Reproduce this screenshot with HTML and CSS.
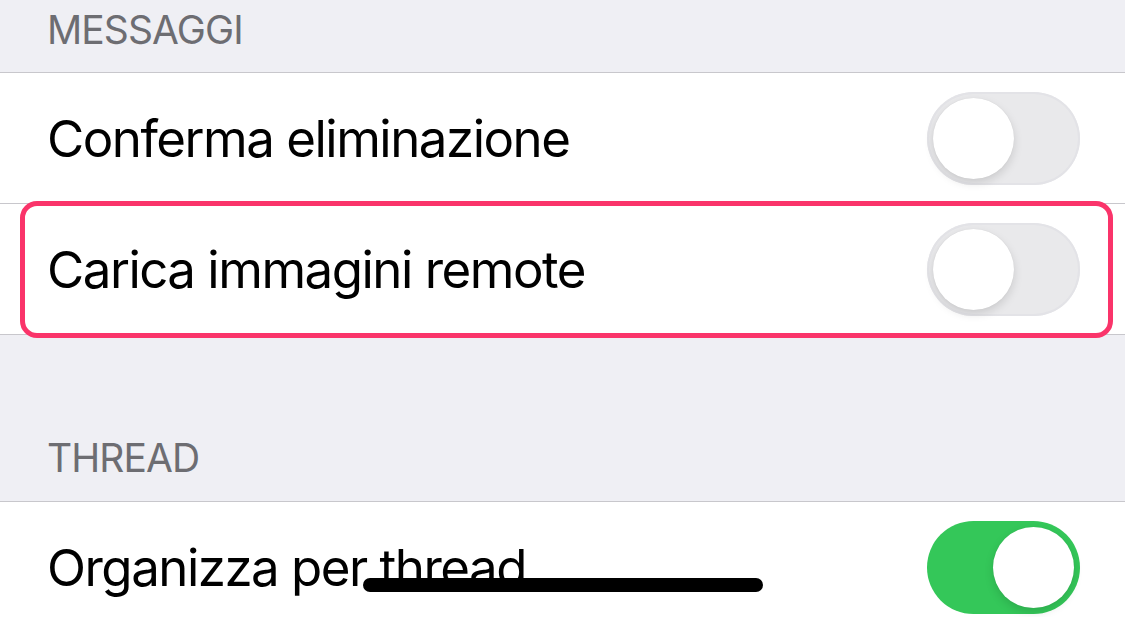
FILE: index.html
```html
<!DOCTYPE html>
<html lang="it">
<head>
  <meta charset="utf-8">
  <title>Impostazioni Mail</title>
  <link rel="stylesheet" href="styles.css">
</head>
<body>
  <div class="screen">
    <div class="group-header first">MESSAGGI</div>
    <ul class="group">
      <li class="cell">
        <span class="cell-label">Conferma eliminazione</span>
        <span class="switch"><span class="knob"></span></span>
      </li>
      <li class="cell">
        <span class="cell-label">Carica immagini remote</span>
        <span class="switch"><span class="knob"></span></span>
      </li>
    </ul>
    <div class="group-header">THREAD</div>
    <ul class="group">
      <li class="cell">
        <span class="cell-label">Organizza per thread</span>
        <span class="switch on"><span class="knob"></span></span>
      </li>
    </ul>
    <div class="highlight"></div>
    <div class="home-indicator"></div>
  </div>
</body>
</html>
```

FILE: styles.css
```css
html, body {
  margin: 0;
  padding: 0;
  height: 100%;
}
body {
  background: #efeff4;
  font-family: Inter, "Liberation Sans", sans-serif;
  overflow: hidden;
}
.screen {
  position: relative;
  height: 617px;
}
.group-header {
  color: #6d6d72;
  font-size: 39px;
  line-height: 1;
  letter-spacing: -0.9px;
  padding: 0 0 24px 47px;
  height: 166px;
  box-sizing: border-box;
  display: flex;
  align-items: flex-end;
}
.group-header.first {
  height: 72px;
  align-items: flex-start;
  padding-top: 10px;
  padding-bottom: 0;
}
.group {
  list-style: none;
  margin: 0;
  padding: 0;
  background: #fff;
  border-top: 1px solid #c8c7cc;
  border-bottom: 1px solid #c8c7cc;
}
.cell {
  display: flex;
  align-items: center;
  justify-content: space-between;
  height: 130px;
  padding: 0 45px 0 47px;
  position: relative;
}
.cell + .cell {
  border-top: 1px solid #c8c7cc;
}
.cell-label {
  font-size: 51px;
  color: #000;
  letter-spacing: -1.5px;
}
.switch {
  width: 153px;
  height: 93px;
  border-radius: 47px;
  background: #e9e9eb;
  box-shadow: inset 0 0 0 2px #e3e3e7;
  display: flex;
  align-items: center;
  padding: 0 6px;
  box-sizing: border-box;
}
.switch.on {
  background: #34c759;
  box-shadow: none;
  justify-content: flex-end;
}
.knob {
  width: 81px;
  height: 81px;
  border-radius: 50%;
  background: #fff;
  box-shadow: 0 4px 10px rgba(0, 0, 0, 0.13), 0 0 1px rgba(0, 0, 0, 0.1);
}
.highlight {
  position: absolute;
  left: 20px;
  top: 201px;
  width: 1093px;
  height: 137px;
  box-sizing: border-box;
  border: 5px solid #fa346a;
  border-radius: 17px;
}
.home-indicator {
  position: absolute;
  left: 363px;
  top: 578px;
  width: 400px;
  height: 14px;
  border-radius: 7px;
  background: #000;
}
```
